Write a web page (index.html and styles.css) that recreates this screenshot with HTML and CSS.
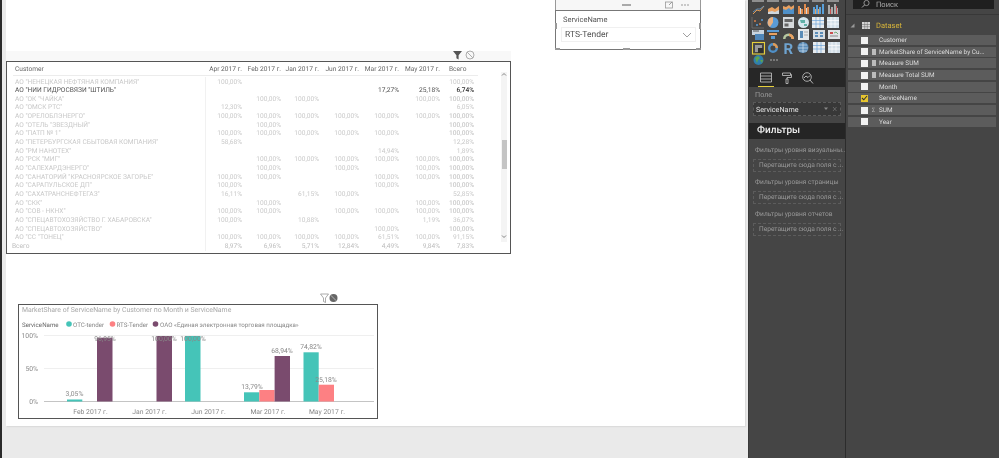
FILE: index.html
```html
<!DOCTYPE html>
<html lang="ru">
<head>
<meta charset="utf-8">
<title>Power BI</title>
<link rel="stylesheet" href="styles.css">
</head>
<body>
<div class="app">
  <div class="edge"></div>
  <main class="canvas">
    <div class="page">
      <div class="band"></div>

      <svg class="hdr-icons table-icons" width="30" height="12" viewBox="0 0 30 12">
        <path d="M2 2h9L7.600 6.300V10.500L5.400 9.300V6.300z" fill="#555"/>
        <circle cx="19" cy="6" r="4" fill="none" stroke="#999" stroke-width=".8"/>
        <path d="M16.200 3.200l5.600 5.600" stroke="#999" stroke-width=".8"/>
      </svg>

      <section class="table-visual">
        <div class="row head">
          <span class="name">Customer</span><span>Apr 2017 г.</span><span>Feb 2017 г.</span><span>Jan 2017 г.</span><span>Jun 2017 г.</span><span>Mar 2017 г.</span><span>May 2017 г.</span><span class="t-left">Всего</span>
        </div>
        <div class="vline"></div>
        <div class="row"><span class="name">АО "НЕНЕЦКАЯ НЕФТЯНАЯ КОМПАНИЯ"</span><span>100,00%</span><span></span><span></span><span></span><span></span><span></span><span>100,00%</span></div>
        <div class="row sel"><span class="name">АО "НИИ ГИДРОСВЯЗИ "ШТИЛЬ"</span><span></span><span></span><span></span><span></span><span>17,27%</span><span>25,18%</span><span class="tot">6,74%</span></div>
        <div class="row"><span class="name">АО "ОК "ЧАЙКА"</span><span></span><span>100,00%</span><span>100,00%</span><span></span><span></span><span>100,00%</span><span class="tot">100,00%</span></div>
        <div class="row"><span class="name">АО "ОМСК РТС"</span><span>12,30%</span><span></span><span></span><span></span><span></span><span></span><span>6,05%</span></div>
        <div class="row"><span class="name">АО "ОРЕЛОБЛЭНЕРГО"</span><span>100,00%</span><span>100,00%</span><span>100,00%</span><span>100,00%</span><span>100,00%</span><span>100,00%</span><span class="tot">100,00%</span></div>
        <div class="row"><span class="name">АО "ОТЕЛЬ "ЗВЕЗДНЫЙ"</span><span></span><span>100,00%</span><span></span><span></span><span></span><span></span><span class="tot">100,00%</span></div>
        <div class="row"><span class="name">АО "ПАТП № 1"</span><span>100,00%</span><span>100,00%</span><span>100,00%</span><span>100,00%</span><span>100,00%</span><span></span><span class="tot">100,00%</span></div>
        <div class="row"><span class="name">АО "ПЕТЕРБУРГСКАЯ СБЫТОВАЯ КОМПАНИЯ"</span><span>58,68%</span><span></span><span></span><span></span><span></span><span></span><span>12,28%</span></div>
        <div class="row"><span class="name">АО "РМ НАНОТЕХ"</span><span></span><span></span><span></span><span></span><span>14,94%</span><span></span><span>1,89%</span></div>
        <div class="row"><span class="name">АО "РСК "МИГ"</span><span></span><span>100,00%</span><span>100,00%</span><span>100,00%</span><span>100,00%</span><span>100,00%</span><span class="tot">100,00%</span></div>
        <div class="row"><span class="name">АО "САЛЕХАРДЭНЕРГО"</span><span></span><span>100,00%</span><span></span><span>100,00%</span><span></span><span>100,00%</span><span class="tot">100,00%</span></div>
        <div class="row"><span class="name">АО "САНАТОРИЙ "КРАСНОЯРСКОЕ ЗАГОРЬЕ"</span><span>100,00%</span><span>100,00%</span><span></span><span></span><span>100,00%</span><span>100,00%</span><span class="tot">100,00%</span></div>
        <div class="row"><span class="name">АО "САРАПУЛЬСКОЕ ДП"</span><span>100,00%</span><span></span><span></span><span></span><span>100,00%</span><span></span><span class="tot">100,00%</span></div>
        <div class="row"><span class="name">АО "САХАТРАНСНЕФТЕГАЗ"</span><span>16,11%</span><span></span><span>61,15%</span><span>100,00%</span><span></span><span></span><span>52,85%</span></div>
        <div class="row"><span class="name">АО "СКК"</span><span></span><span>100,00%</span><span></span><span></span><span></span><span>100,00%</span><span class="tot">100,00%</span></div>
        <div class="row"><span class="name">АО "СОВ - НКНХ"</span><span>100,00%</span><span>100,00%</span><span></span><span>100,00%</span><span>100,00%</span><span>100,00%</span><span class="tot">100,00%</span></div>
        <div class="row"><span class="name">АО "СПЕЦАВТОХОЗЯЙСТВО Г. ХАБАРОВСКА"</span><span>100,00%</span><span></span><span>10,88%</span><span></span><span></span><span>1,19%</span><span>36,07%</span></div>
        <div class="row"><span class="name">АО "СПЕЦАВТОХОЗЯЙСТВО"</span><span></span><span></span><span></span><span></span><span>100,00%</span><span></span><span class="tot">100,00%</span></div>
        <div class="row"><span class="name">АО "СС "ТОНЕЦ"</span><span>100,00%</span><span>100,00%</span><span>100,00%</span><span>100,00%</span><span>61,51%</span><span>100,00%</span><span>91,15%</span></div>
        <div class="row total"><span class="name">Всего</span><span>8,97%</span><span>6,96%</span><span>5,71%</span><span>12,84%</span><span>4,49%</span><span>9,84%</span><span>7,83%</span></div>
        <div class="scroll">
          <svg class="arrow" width="6" height="5" viewBox="0 0 6 5"><path d="M1 3.500L3 1.500L5 3.500" fill="none" stroke="#666" stroke-width=".8"/></svg>
          <div class="thumb"></div>
          <svg class="arrow" width="6" height="5" viewBox="0 0 6 5"><path d="M1 1.500L3 3.500L5 1.500" fill="none" stroke="#666" stroke-width=".8"/></svg>
        </div>
      </section>

      <div class="slicer-top">
        <div class="grip"></div>
        <svg class="slicer-icons" width="34" height="8" viewBox="0 0 34 8">
          <rect x=".5" y="1" width="7" height="6" fill="none" stroke="#999" stroke-width=".8"/>
          <path d="M4 4L7 1" stroke="#888" stroke-width=".8"/>
          <circle cx="17" cy="4" r=".7" fill="#777"/><circle cx="20" cy="4" r=".7" fill="#777"/><circle cx="23" cy="4" r=".7" fill="#777"/>
        </svg>
      </div>
      <section class="slicer">
        <div class="slicer-label">ServiceName</div>
        <div class="slicer-box">
          <span>RTS-Tender</span>
          <svg width="10" height="6" viewBox="0 0 10 6"><path d="M1 1l4 4 4-4" fill="none" stroke="#888" stroke-width=".8"/></svg>
        </div>
        <i class="handle h-bl"></i><i class="handle h-br"></i><i class="handle h-bm"></i><i class="handle h-lm"></i><i class="handle h-rm"></i>
      </section>

      <svg class="hdr-icons chart-icons" width="30" height="12" viewBox="0 0 30 12">
        <path d="M1.500 2h8L6.500 6V10.500L4.500 9.500V6z" fill="#fff" stroke="#888" stroke-width=".7"/>
        <circle cx="14.500" cy="6" r="4" fill="#666"/>
        <path d="M11.800 3.300l5.400 5.400" stroke="#ccc" stroke-width=".8"/>
      </svg>

      <section class="chart-visual">
        <svg class="chart" width="358" height="113" viewBox="19 305 358 113">
          <text x="22" y="311.500" class="c-title">MarketShare of ServiceName by Customer по Month и ServiceName</text>
          <text x="22" y="327" class="c-leg dark">ServiceName</text>
          <circle cx="69" cy="324" r="2.800" fill="#45c4b8"/><text x="73" y="327" class="c-leg">ОТС-tender</text>
          <circle cx="112.500" cy="324" r="2.800" fill="#fd8083"/><text x="116.500" y="327" class="c-leg">RTS-Tender</text>
          <circle cx="155.500" cy="324" r="2.800" fill="#7a4b6e"/><text x="160" y="327" class="c-leg">ОАО «Единая электронная торговая площадка»</text>

          <path d="M44 335.500H374M44 368.500H374" stroke="#efefef" stroke-width="1"/>
          <path d="M44 401.500H374" stroke="#c4c4c4" stroke-width="1"/>
          <text x="38" y="337.500" class="c-axis end">100%</text>
          <text x="38" y="370.500" class="c-axis end">50%</text>
          <text x="38" y="403.500" class="c-axis end">0%</text>

          <rect x="67" y="399.500" width="15.300" height="2" fill="#45c4b8"/>
          <rect x="97" y="337.700" width="15.500" height="63.800" fill="#7a4b6e"/>
          <rect x="156.500" y="336" width="15.500" height="65.500" fill="#7a4b6e"/>
          <rect x="185" y="336" width="15.500" height="65.500" fill="#45c4b8"/>
          <rect x="244" y="392.300" width="15.300" height="9.200" fill="#45c4b8"/>
          <rect x="259.300" y="390" width="15.300" height="11.500" fill="#fd8083"/>
          <rect x="274.600" y="356" width="15.400" height="45.500" fill="#7a4b6e"/>
          <rect x="303.500" y="352.300" width="15.200" height="49.200" fill="#45c4b8"/>
          <rect x="318.700" y="384.700" width="15.300" height="16.800" fill="#fd8083"/>

          <text x="74.500" y="395.500" class="c-axis mid">3,05%</text>
          <text x="105" y="340.500" class="c-axis mid">96,95%</text>
          <text x="164" y="340.500" class="c-axis mid">100,00%</text>
          <text x="193" y="340.500" class="c-axis mid">100,00%</text>
          <text x="252" y="388.500" class="c-axis mid">13,79%</text>
          <text x="282" y="352.500" class="c-axis mid">68,94%</text>
          <text x="311" y="348.500" class="c-axis mid">74,82%</text>
          <text x="326" y="381.500" class="c-axis mid">25,18%</text>

          <text x="90.500" y="413.500" class="c-axis mid">Feb 2017 г.</text>
          <text x="149.500" y="413.500" class="c-axis mid">Jan 2017 г.</text>
          <text x="208.500" y="413.500" class="c-axis mid">Jun 2017 г.</text>
          <text x="268" y="413.500" class="c-axis mid">Mar 2017 г.</text>
          <text x="327" y="413.500" class="c-axis mid">May 2017 г.</text>
        </svg>
      </section>
    </div>
  </main>

  <aside class="viz-panel">
    <svg class="gallery" width="97" height="68" viewBox="748 0 97 68">
      <g fill="#8f8f8f"><rect x="752" y="0" width="12" height="2"/><rect x="767" y="0" width="12" height="2"/><rect x="782" y="0" width="12" height="2"/><rect x="797" y="0" width="12" height="2"/><rect x="812" y="0" width="12" height="2"/><rect x="827" y="0" width="12" height="2"/></g>
      <path d="M753 14l4-4 3 1 4-5" fill="none" stroke="#e09a54" stroke-width="1"/><path d="M753 12l4-3 3 0 4-3" fill="none" stroke="#6aa0d0" stroke-width=".8"/>
      <path d="M768 14V9l4-2 3 2 4-3v8z" fill="#e8a060"/><path d="M768 14v-2l4-1 3 1 4-2v4z" fill="#cfd6dc"/>
      <path d="M783 14V6l3 1 3-2 2 2 3-2v9z" fill="#e8a060"/><path d="M783 14v-5l3 1 3-2 2 2 3-2v6z" fill="#4f90c8"/>
      <path d="M798 14V6h2v8zM801 14V9h2v5zM804 14V4h2v10zM807 14V7h2v7z" fill="#e08a4c"/><path d="M800 14V8h1v6zM806 14V8h1v6z" fill="#cfd6dc"/>
      <path d="M813 14V7h2v7zM816 14V5h2v9zM819 14V7h2v7zM822 14V4h2v10z" fill="#5aa0d8"/><path d="M815 14V9h1v5zM818 14V9h1v5z" fill="#e8a060"/>
      <path d="M828 14V5h2v9zM831 14V7h2v7zM834 14V4h2v10zM837 14V8h1v6z" fill="#aaa"/><path d="M830 14V9h1v5zM836 14V6h1v8z" fill="#c84f4f"/>
      <g fill="#d9804a"><circle cx="755" cy="21" r="1"/><circle cx="760" cy="24" r="1"/></g><g fill="#5b9bd5"><circle cx="757" cy="25" r="1"/><circle cx="762" cy="20" r="1"/></g><path d="M752 17v11h12" fill="none" stroke="#777" stroke-width=".7"/>
      <circle cx="773" cy="22.500" r="5.500" fill="#5b9bd5"/><path d="M773 22.500V17a5.500 5.500 0 0 0-3 10z" fill="#e8b080"/>
      <rect x="783" y="17" width="11" height="11" fill="#d6dadd"/><path d="M784.500 19h8v3h-8zM784.500 23.500h4v3h-4z" fill="#666"/>
      <circle cx="803.500" cy="22.500" r="5.500" fill="#d5e6ee"/><path d="M800 20h5v3h-4zM804 24h3v2h-3z" fill="#5fb0a8"/>
      <path d="M812 17h12v11h-12z" fill="#e8ecef"/><path d="M812 20.500h12M812 24h12M816 17v11M820 17v11" stroke="#5b9bd5" stroke-width=".6"/>
      <path d="M827 17h12v11h-12z" fill="#d3dfe8"/><path d="M827 20.500h12M827 24h12M831 17v11M835 17v11" stroke="#fff" stroke-width=".7"/>
      <rect x="752" y="30" width="12" height="5" fill="#c8d4de"/><rect x="755" y="34" width="9" height="6" fill="#4f86b8"/><path d="M753 31h6" stroke="#555"/>
      <path d="M767 30h12v2h-12z" fill="#5b9bd5"/><path d="M769 33h8v2h-8z" fill="#e8a060"/><path d="M771 36h4v3h-4z" fill="#5b9bd5"/>
      <path d="M783 39a5.500 5.500 0 0 1 11 0h-2.500a3 3 0 0 0-6 0z" fill="#b5c7a0"/><path d="M789 33.500a5.500 5.500 0 0 1 5 5.500h-2.500a3 3 0 0 0-2.500-3z" fill="#e8a060"/>
      <rect x="798" y="29" width="11" height="11" fill="#e4e8eb"/><path d="M800 31h3v7h-3z" fill="#5b8db8"/><path d="M804 32h4M804 35h4" stroke="#999" stroke-width=".8"/>
      <rect x="813" y="30" width="12" height="9" fill="#d6dde2"/><path d="M815 32h3v2h-3zM820 32h3v2h-3zM815 35h3v2h-3zM820 35h3v2h-3z" fill="#5b8db8"/>
      <rect x="828" y="30" width="12" height="9" fill="#dfe3e6"/><path d="M830 32h3v2h-3z" fill="#c84f4f"/><path d="M834 33l2-1 2 2" fill="none" stroke="#5a9a5a" stroke-width=".8"/><path d="M830 36h8" stroke="#888"/>
      <rect x="752.500" y="42.500" width="12" height="11.500" fill="#444" stroke="#e6cf3c" stroke-width="1.100"/>
      <path d="M755 45h7v7h-7z" fill="#9a9a9a"/><path d="M758 48h5v5h-5z" fill="#2f2f2f"/>
      <circle cx="773" cy="48" r="3.800" fill="none" stroke="#4f90c8" stroke-width="2.400"/><path d="M773 44.200a3.800 3.800 0 0 1 3.800 3.800" fill="none" stroke="#e09a54" stroke-width="2.400"/>
      <text x="783.500" y="54" class="r-glyph">R</text>
      <circle cx="803" cy="47.500" r="5.500" fill="#5b8db8"/><path d="M799 45h8M798 48h10M799 51h8M803 42v11" stroke="#cfe0ec" stroke-width=".7"/>
      <path d="M813 42h12v11h-12z" fill="#e8ecef"/><path d="M813 45.500h12M813 49h12M817 42v11M821 42v11" stroke="#5b9bd5" stroke-width=".6"/>
      <path d="M828 42h12v11h-12z" fill="#d3dfe8"/><path d="M828 45.500h12M828 49h12M832 42v11M836 42v11" stroke="#fff" stroke-width=".7"/>
      <circle cx="758.500" cy="60" r="5" fill="#2f7fae"/><path d="M755 58l3-2 2 2-2 2-1 3zM760 60h3l-1 3z" fill="#5ea34f"/>
      <circle cx="771" cy="60" r=".8" fill="#bbb"/><circle cx="774" cy="60" r=".8" fill="#bbb"/><circle cx="777" cy="60" r=".8" fill="#bbb"/>
    </svg>

    <div class="tabs">
      <div class="tab on">
        <svg width="12" height="11" viewBox="0 0 12 11"><path d="M.5 1h11v9H.5zM.5 4h11M.5 7h11" fill="none" stroke="#c8c8c8" stroke-width=".8"/></svg>
      </div>
      <div class="tab">
        <svg width="10" height="12" viewBox="0 0 10 12"><path d="M.5 1h8v2.500h-8zM8.500 2.500h1V5.500H5V7M4 7h2v4.500H4z" fill="none" stroke="#c8c8c8" stroke-width=".8"/></svg>
      </div>
      <div class="tab">
        <svg width="12" height="12" viewBox="0 0 12 12"><circle cx="5" cy="5" r="4.300" fill="none" stroke="#c8c8c8" stroke-width=".8"/><path d="M2 6l2-2 2 1.500 2-2M8 8l3 3.500" fill="none" stroke="#c8c8c8" stroke-width=".9"/></svg>
      </div>
    </div>

    <div class="wells">
      <div class="well-label">Поле</div>
      <div class="well-item">
        <span>ServiceName</span>
        <svg width="14" height="6" viewBox="0 0 14 6"><path d="M0 1.500h4L2 4z" fill="#888"/><path d="M9 1l3.500 4M12.500 1L9 5" stroke="#777" stroke-width=".7"/></svg>
      </div>
    </div>

    <h2 class="filters-title">Фильтры</h2>
    <div class="filters">
      <div class="f-label">Фильтры уровня визуальны...</div>
      <div class="f-drop">Перетащите сюда поля с ...</div>
      <div class="f-label">Фильтры уровня страницы</div>
      <div class="f-drop">Перетащите сюда поля с ...</div>
      <div class="f-label">Фильтры уровня отчетов</div>
      <div class="f-drop">Перетащите сюда поля с ...</div>
    </div>
  </aside>

  <aside class="fields-panel">
    <div class="search">
      <svg width="9" height="9" viewBox="0 0 9 9"><circle cx="5.500" cy="3" r="2.600" fill="none" stroke="#aaa" stroke-width=".8"/><path d="M3.500 5L1 7.500" stroke="#aaa" stroke-width="1"/></svg>
      <span>Поиск</span>
    </div>
    <div class="dataset">
      <svg class="tri" width="5" height="5" viewBox="0 0 5 5"><path d="M4.500 .5v4h-4z" fill="#999"/></svg>
      <svg width="8" height="7" viewBox="0 0 8 7"><rect width="8" height="7" fill="#d8d8d8"/><path d="M0 2.500h8M0 4.700h8M2.700 0v7M5.300 0v7" stroke="#666" stroke-width=".5"/></svg>
      <span>Dataset</span>
    </div>
    <ul class="field-list">
      <li><i class="cb"></i><b class="fi"></b><span>Customer</span></li>
      <li><i class="cb"></i><b class="fi calc"></b><span>MarketShare of ServiceName by Cu...</span></li>
      <li><i class="cb"></i><b class="fi calc"></b><span>Measure SUM</span></li>
      <li><i class="cb"></i><b class="fi calc"></b><span>Measure Total SUM</span></li>
      <li><i class="cb"></i><b class="fi"></b><span>Month</span></li>
      <li><i class="cb on"><svg width="7" height="6" viewBox="0 0 7 6"><path d="M1 3l1.800 1.800L6 1" fill="none" stroke="#333" stroke-width="1.100"/></svg></i><b class="fi"></b><span>ServiceName</span></li>
      <li><i class="cb"></i><b class="fi sum">Σ</b><span>SUM</span></li>
      <li><i class="cb"></i><b class="fi"></b><span>Year</span></li>
    </ul>
  </aside>
</div>
</body>
</html>
```

FILE: styles.css
```css
* { box-sizing: border-box; }
html, body { margin: 0; height: 100%; overflow: hidden; }
body { font-family: Roboto, "Open Sans", sans-serif; background: #eaeaea; text-rendering: geometricPrecision; }
.app { display: flex; width: 999px; height: 458px; filter: blur(.35px); }

.edge { width: 2px; background: #2a2a2a; flex: none; }
.canvas { flex: none; width: 746px; background: #eaeaea; padding-left: 4px; position: relative; }
.page { position: relative; width: 739px; height: 426px; background: #fff; box-shadow: 1px 1px 1px #dcdcdc; }

/* report canvas: visuals sit at free positions on the page (page origin 6,0) */
.band { position: absolute; left: 0; top: 51px; width: 505px; height: 10px; background: #f8f8f8; }
.hdr-icons { position: absolute; display: block; }
.table-icons { left: 445px; top: 49px; }
.chart-icons { left: 313px; top: 292px; }

.table-visual { position: absolute; left: 0; top: 61px; width: 505px; height: 193px; border: 1px solid #555; padding: 3px 0 0 8px; font-size: 6.600px; color: #c9c9c9; }
.row { display: grid; grid-template-columns: 188px 39px 39px 38px 40px 40px 41px 34px; height: 8.67px; line-height: 8.67px; white-space: nowrap; }
.row span { text-align: right; }
.row .name { text-align: left; }
.head { height: 11px; line-height: 9px; margin-bottom: 1.500px; color: #666; border-bottom: 1px solid #ececec; width: 465px; margin-left: -2px; padding-left: 2px; }
.row.head .t-left { text-align: left; padding-left: 9px; }
.row .tot { font-weight: 500; }
.sel { color: #555; }
.sel .tot { color: #333; }
.total .name { margin-left: -3px; }
.total { color: #bdbdbd; }
.vline { position: absolute; left: 198px; top: 15px; height: 174px; width: 1px; background: #f1f1f1; }
.scroll { position: absolute; right: 3px; top: 10px; bottom: 11px; width: 6px; background: #f4f4f4; display: flex; flex-direction: column; align-items: center; }
.arrow { display: block; flex: none; }
.thumb { width: 5px; height: 29px; background: #c4c4c4; margin: 63px 0 65px; flex: none; }

.slicer-top { position: absolute; left: 549px; top: 0; width: 146px; height: 10px; background: #f7f7f7; border-left: 1px solid #999; border-right: 1px solid #999; }
.grip { position: absolute; left: 66px; top: 4px; width: 9px; height: 2px; border-top: 1px solid #aaa; border-bottom: 1px solid #aaa; }
.slicer-icons { position: absolute; right: 1px; top: 1px; display: block; }
.slicer { position: absolute; left: 549px; top: 10px; width: 146px; height: 40px; border: 1px solid #777; padding: 4px 5px 0 7px; background: #fff; }
.slicer-label { font-size: 7.500px; line-height: 10px; color: #555; }
.slicer-box { margin: 2px 0 0 -2px; width: 135px; height: 15px; border: 1px solid #f0f0f0; display: flex; align-items: center; justify-content: space-between; padding: 1px 3px 0; font-size: 8.500px; color: #555; }
.handle { position: absolute; background: #999; }
.h-bl { left: -1px; bottom: -1px; width: 5px; height: 2px; }
.h-br { right: -1px; bottom: -1px; width: 5px; height: 2px; }
.h-bm { left: 67px; bottom: -1px; width: 7px; height: 2px; }
.h-lm { left: -1px; top: 12px; width: 2px; height: 6px; }
.h-rm { right: -1px; top: 12px; width: 2px; height: 6px; }

.chart-visual { position: absolute; left: 12px; top: 304px; width: 360px; height: 115px; border: 1px solid #555; }
.chart { display: block; }
.chart text { font-family: Roboto, sans-serif; }
.c-title { font-size: 6.900px; fill: #a8a8a8; }
.c-leg { font-size: 6.200px; fill: #888; }
.c-leg.dark { fill: #666; }
.c-axis { font-size: 6.800px; fill: #888; }
.end { text-anchor: end; }
.mid { text-anchor: middle; }
.r-glyph { font-size: 15px; font-weight: 700; fill: #6ea3cf; }

/* right hand panels */
.viz-panel { flex: none; width: 97px; background: #454545; display: flex; flex-direction: column; border-left: 1px solid #3a3a3a; color: #aaa; }
.gallery { display: block; flex: none; margin-left: -1px; }
.tabs { flex: none; display: flex; height: 19px; background: #272727; padding-left: 9px; gap: 5px; }
.tab { width: 16px; height: 19px; display: flex; align-items: center; justify-content: center; }
.tab.on { border-bottom: 1px solid #e6cf3c; }
.wells { flex: none; height: 36px; padding: 3px 4px; background: #454545; }
.well-label { font-size: 7.200px; line-height: 10px; color: #999; margin-left: 2px; }
.well-item { margin-top: 2px; height: 14px; border: 1px dashed #5a5a5a; background: #383838; display: flex; align-items: center; justify-content: space-between; padding: 0 2px; font-size: 7.200px; color: #e6e6e6; }
.filters-title { flex: none; margin: 0; height: 16px; line-height: 16px; background: #252525; color: #eee; font-size: 10px; font-weight: 500; padding-left: 8px; }
.filters { padding: 6px 4px; }
.f-label { height: 10px; line-height: 10px; font-size: 6.600px; color: #999; margin-left: 2px; white-space: nowrap; }
.f-drop { height: 13px; line-height: 11px; margin: 4px 0 5px; border: 1px dashed #5c5c5c; font-size: 6.600px; color: #9a9a9a; padding-left: 5px; white-space: nowrap; }

.fields-panel { flex: none; width: 154px; background: #454545; border-left: 1px solid #2c2c2c; padding: 0 3px 0 2px; color: #ddd; }
.search { height: 9px; margin: 0 2px 5px 5px; background: #1f1f1f; display: flex; align-items: center; gap: 6px; padding-left: 8px; font-size: 7.500px; color: #aaa; overflow: hidden; }
.dataset { height: 21px; display: flex; align-items: center; padding-left: 3px; gap: 6px; font-size: 7.500px; color: #d8b53a; border-top: 1px solid #383838; margin: 0 -3px 0 -2px; }
.dataset .tri { margin-left: 1px; margin-right: 1px; }
.field-list { list-style: none; margin: 0; padding: 0; }
.field-list li { height: 10px; margin-bottom: 1.700px; background: #5c5c5c; display: flex; align-items: center; font-size: 6.400px; color: #dcdcdc; white-space: nowrap; }
.cb { width: 7px; height: 7px; background: #f2f2f2; margin-left: 13px; flex: none; display: flex; align-items: center; justify-content: center; }
.cb.on { background: #e8c62e; }
.fi { width: 11px; flex: none; font-size: 6px; font-weight: 400; color: #aaa; display: flex; align-items: center; justify-content: center; }
.fi.calc::before { content: ""; width: 4px; height: 6px; background: #bbb; display: block; }
```
